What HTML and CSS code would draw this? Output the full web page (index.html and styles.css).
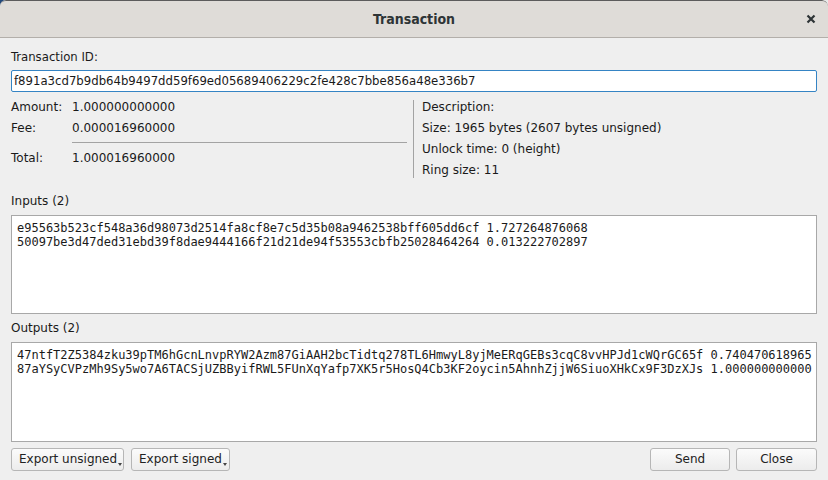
FILE: index.html
```html
<!DOCTYPE html>
<html>
<head>
<meta charset="utf-8">
<title>Transaction</title>
<link rel="stylesheet" href="styles.css">
</head>
<body>
<div class="window">
  <div class="titlebar">
    <span class="title">Transaction</span>
    <span class="close">
      <svg width="10" height="10" viewBox="0 0 10 10"><path d="M1.5 1.5 L8.5 8.5 M8.5 1.5 L1.5 8.5" stroke="#2e3436" stroke-width="2.2" stroke-linecap="butt"/></svg>
    </span>
  </div>
  <div class="content">
    <div class="cond-label">Transaction ID:</div>
    <div class="txid">f891a3cd7b9db64b9497dd59f69ed05689406229c2fe428c7bbe856a48e336b7</div>
    <div class="details">
      <div class="left">
        <div class="row"><span class="key">Amount:</span><span>1.000000000000</span></div>
        <div class="row"><span class="key">Fee:</span><span>0.000016960000</span></div>
        <div class="sep"></div>
        <div class="row"><span class="key">Total:</span><span>1.000016960000</span></div>
      </div>
      <div class="right">
        <div class="row">Description:</div>
        <div class="row">Size: 1965 bytes (2607 bytes unsigned)</div>
        <div class="row">Unlock time: 0 (height)</div>
        <div class="row">Ring size: 11</div>
      </div>
    </div>
    <div class="section-label first">Inputs (2)</div>
    <div class="box inputs">e95563b523cf548a36d98073d2514fa8cf8e7c5d35b08a9462538bff605dd6cf 1.727264876068
50097be3d47ded31ebd39f8dae9444166f21d21de94f53553cbfb25028464264 0.013222702897</div>
    <div class="section-label">Outputs (2)</div>
    <div class="box outputs">47ntfT2Z5384zku39pTM6hGcnLnvpRYW2Azm87GiAAH2bcTidtq278TL6HmwyL8yjMeERqGEBs3cqC8vvHPJd1cWQrGC65f 0.740470618965
87aYSyCVPzMh9Sy5wo7A6TACSjUZBByifRWL5FUnXqYafp7XK5r5HosQ4Cb3KF2oycin5AhnhZjjW6SiuoXHkCx9F3DzXJs 1.000000000000</div>
    <div class="buttons">
      <div class="btn menu w-unsigned">Export unsigned<span class="arrow"></span></div>
      <div class="btn menu w-signed">Export signed<span class="arrow"></span></div>
      <div class="spacer"></div>
      <div class="btn w-send">Send</div>
      <div class="btn w-close">Close</div>
    </div>
  </div>
</div>
</body>
</html>
```
FILE: styles.css
```css
html, body {
  margin: 0;
  padding: 0;
}
body {
  width: 828px;
  height: 480px;
  overflow: hidden;
  background: linear-gradient(90deg, #23497a 50%, #e9e9e9 50%);
  font-family: "DejaVu Sans", sans-serif;
  font-size: 12px;
  color: #1a1a1a;
}
.window {
  width: 828px;
  height: 480px;
  background: #efefef;
  border-radius: 6px 6px 0 0;
  overflow: hidden;
}
.titlebar {
  height: 36px;
  border-top: 1px solid #5c5c5c;
  border-bottom: 1px solid #b3afaa;
  border-radius: 6px 6px 0 0;
  background: #dfdcd8;
  display: flex;
  align-items: center;
  justify-content: center;
  position: relative;
}
.title {
  font-family: "DejaVu Sans Condensed", "DejaVu Sans", sans-serif;
  font-stretch: condensed;
  font-weight: bold;
  font-size: 14px;
  color: #2e3436;
}
.close {
  position: absolute;
  right: 12px;
  top: 13px;
  width: 10px;
  height: 10px;
  display: flex;
}
.content {
  padding: 11px 11px 0 11px;
}
.cond-label {
  font-family: "DejaVu Sans Condensed", "DejaVu Sans", sans-serif;
  font-stretch: condensed;
  font-size: 13px;
  line-height: 16px;
  height: 16px;
}
.txid {
  margin-top: 5px;
  height: 20px;
  border: 1px solid #3584c4;
  border-radius: 2px;
  background: #ffffff;
  font-family: "DejaVu Sans Condensed", "DejaVu Sans", sans-serif;
  font-stretch: condensed;
  font-size: 13px;
  line-height: 20px;
  padding-left: 2px;
}
.details {
  margin-top: 5px;
  display: flex;
  height: 84px;
}
.left {
  width: 396px;
}
.row {
  height: 21px;
  line-height: 21px;
  white-space: nowrap;
}
.key {
  display: inline-block;
  width: 61px;
}
.sep {
  margin: 3px 0 5px 61px;
  height: 1px;
  background: #a3a3a3;
}
.right {
  margin-left: 6px;
  margin-top: 3px;
  height: 78px;
  border-left: 1px solid #a3a3a3;
  padding-left: 8px;
}
.right .row:first-child {
  margin-top: -3px;
}
.section-label {
  margin-top: 6px;
  height: 16px;
  line-height: 16px;
}
.section-label.first {
  margin-top: 12px;
}
.box {
  margin-top: 6px;
  background: #ffffff;
  border: 1px solid #a8a8a8;
  font-family: "DejaVu Sans Mono", monospace;
  font-size: 12px;
  line-height: 14px;
  white-space: pre;
  padding: 5px 5px 0 5px;
  overflow: hidden;
  box-sizing: border-box;
}
.inputs {
  height: 99px;
}
.outputs {
  height: 100px;
}
.buttons {
  margin-top: 6px;
  display: flex;
  gap: 7px;
}
.spacer {
  flex: 1;
}
.btn {
  height: 21px;
  line-height: 21px;
  border: 1px solid #b6b6b6;
  border-radius: 3px;
  background: linear-gradient(#fbfbfb, #ececec);
  text-align: center;
  box-sizing: content-box;
  position: relative;
  color: #222;
}
.btn.menu {
  text-align: left;
  padding-left: 7px;
}
.arrow {
  display: inline-block;
  width: 0;
  height: 0;
  border-left: 2.5px solid transparent;
  border-right: 2.5px solid transparent;
  border-top: 3px solid #444;
  margin-left: 1px;
  vertical-align: -3px;
}
.w-unsigned { width: 104px; }
.w-signed { width: 90px; }
.w-send { width: 78px; }
.w-close { width: 79px; }
.w-send + .w-close { margin-left: -1px; }
```
